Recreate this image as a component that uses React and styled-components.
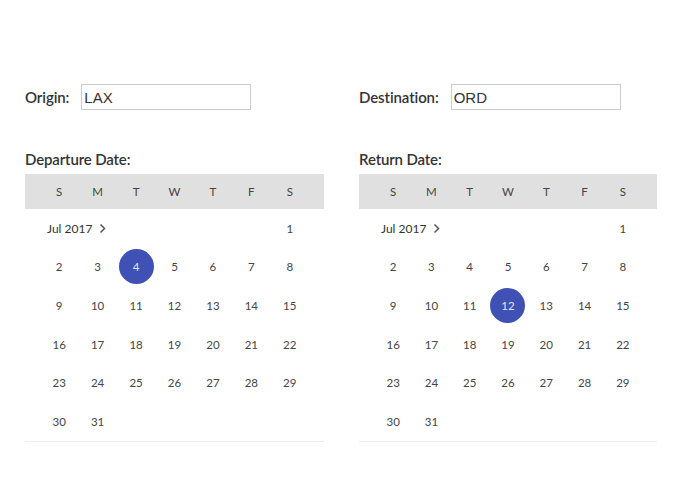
import React from "react";
import styled, { createGlobalStyle } from "styled-components";

const GlobalStyle = createGlobalStyle`
  body {
    margin: 0;
    background: #fff;
    font-family: "Source Sans Pro", "Lato", "Noto Sans", sans-serif;
    color: #333;
  }
`;

const Page = styled.div`
  display: grid;
  grid-template-columns: 299px 298px;
  column-gap: 35px;
  padding: 84px 0 0 25px;
`;

const Column = styled.div`
  display: flex;
  flex-direction: column;
`;

const FieldRow = styled.div`
  display: flex;
  align-items: center;
  height: 26px;
`;

const FieldLabel = styled.label`
  font-size: 15px;
  font-weight: 600;
  color: #333;
  margin-right: 12px;
  letter-spacing: -0.1px;
`;

const TextInput = styled.input`
  box-sizing: border-box;
  width: 170px;
  height: 26px;
  border: 1px solid #ccc;
  padding: 0 2px;
  font-family: "Liberation Sans", Arial, sans-serif;
  font-size: 15px;
  color: #333;
  outline: none;
`;

const DateLabel = styled.div`
  margin-top: 40px;
  height: 18px;
  line-height: 18px;
  font-size: 15px;
  font-weight: 600;
  color: #333;
  margin-bottom: 6px;
  letter-spacing: -0.15px;
`;

const Calendar = styled.div`
  border-bottom: 1px solid #eee;
`;

const WeekHeader = styled.div`
  display: grid;
  grid-template-columns: repeat(7, 1fr);
  padding: 0 15px;
  height: 35px;
  align-items: center;
  background: #e0e0e0;
  font-size: 11.5px;
  color: #444;
  text-align: center;
`;

const Days = styled.div`
  display: grid;
  grid-template-columns: repeat(7, 1fr);
  grid-auto-rows: 38.6px;
  padding: 0 15px;
  font-size: 11.5px;
  color: #444;
`;

const MonthLabel = styled.div`
  grid-column: span 6;
  display: flex;
  align-items: center;
  padding-left: 7px;
  font-size: 12px;
  color: #333;
  gap: 6px;
`;

const Day = styled.div`
  display: flex;
  align-items: center;
  justify-content: center;
`;

const DayNum = styled.span`
  display: flex;
  align-items: center;
  justify-content: center;
  width: 35px;
  height: 35px;
  border-radius: 50%;
  background: ${(p) => (p.$selected ? "#3f51b5" : "transparent")};
  color: ${(p) => (p.$selected ? "#dfe3f7" : "#444")};
`;

const Chevron = () => (
  <svg width="9" height="11" viewBox="0 0 9 11">
    <path d="M2.5 1.5 L6.5 5.5 L2.5 9.5" fill="none" stroke="#555" strokeWidth="1.5" />
  </svg>
);

const weekdays = ["S", "M", "T", "W", "T", "F", "S"];

function MonthCalendar({ selected }) {
  const days = [];
  for (let d = 1; d <= 31; d++) days.push(d);
  return (
    <Calendar>
      <WeekHeader>
        {weekdays.map((w, i) => (
          <div key={i}>{w}</div>
        ))}
      </WeekHeader>
      <Days>
        <MonthLabel>
          Jul 2017 <Chevron />
        </MonthLabel>
        {days.map((d) => (
          <Day key={d}>
            <DayNum $selected={d === selected}>{d}</DayNum>
          </Day>
        ))}
      </Days>
    </Calendar>
  );
}

export default function App() {
  return (
    <>
      <GlobalStyle />
      <Page>
        <Column>
          <FieldRow>
            <FieldLabel>Origin:</FieldLabel>
            <TextInput defaultValue="LAX" />
          </FieldRow>
          <DateLabel>Departure Date:</DateLabel>
          <MonthCalendar selected={4} />
        </Column>
        <Column>
          <FieldRow>
            <FieldLabel>Destination:</FieldLabel>
            <TextInput defaultValue="ORD" />
          </FieldRow>
          <DateLabel>Return Date:</DateLabel>
          <MonthCalendar selected={12} />
        </Column>
      </Page>
    </>
  );
}
